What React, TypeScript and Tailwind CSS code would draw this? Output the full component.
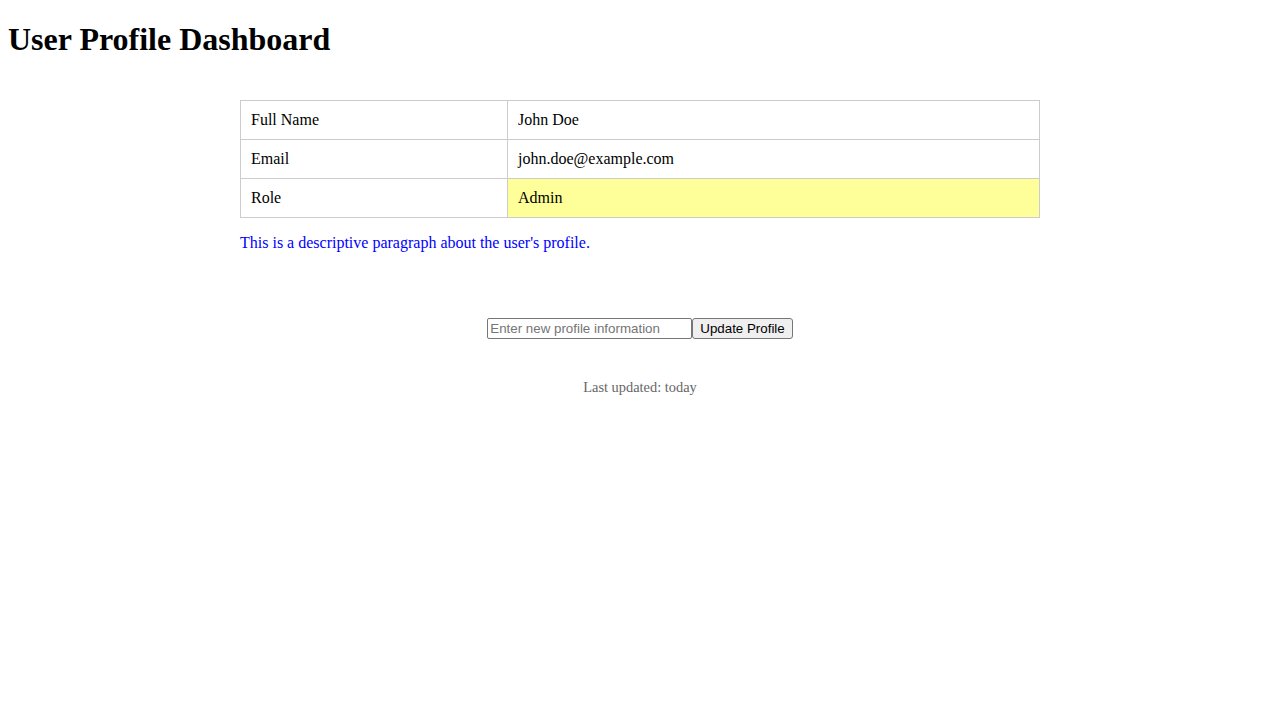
export default function App() {
  const rows = [
    { label: "Full Name", value: "John Doe" },
    { label: "Email", value: "john.doe@example.com" },
    { label: "Role", value: "Admin", highlight: true },
  ];

  return (
    <div className="p-2 font-['Liberation_Serif',serif] text-black text-base bg-white min-h-screen">
      <h1 className="text-[32px] font-bold leading-[37px] mt-[13.44px] mb-[41.56px]">User Profile Dashboard</h1>

      <div className="w-[800px] mx-auto">
        <table className="w-full border-collapse">
          <tbody>
            {rows.map((r) => (
              <tr key={r.label}>
                <td className="w-[267px] border border-[#cccccc] px-[10px] py-[10px] leading-[18px]">{r.label}</td>
                <td
                  className={
                    r.highlight
                      ? "border border-[#cccccc] px-[10px] py-[10px] leading-[18px] bg-[#ffff99]"
                      : "border border-[#cccccc] px-[10px] py-[10px] leading-[18px]"
                  }
                >
                  {r.value}
                </td>
              </tr>
            ))}
          </tbody>
        </table>

        <p className="my-4 leading-[18px] text-[#0000ff]">This is a descriptive paragraph about the user's profile.</p>

        <div className="flex justify-center mt-[66px]">
          <input
            type="text"
            placeholder="Enter new profile information"
            className="w-[205px] h-[21px] border border-[#767676] rounded-[2px] px-[2px] font-['Liberation_Sans',Arial,sans-serif] text-[13.333px] placeholder:text-[#757575] outline-none"
          />
          <button className="h-[21px] px-[7px] bg-[#efefef] border border-[#767676] rounded-[3px] font-['Liberation_Sans',Arial,sans-serif] text-[13.333px] leading-none">
            Update Profile
          </button>
        </div>

        <p className="mt-[40px] text-center text-[14.4px] leading-4 text-[#666666]">Last updated: today</p>
      </div>
    </div>
  );
}
